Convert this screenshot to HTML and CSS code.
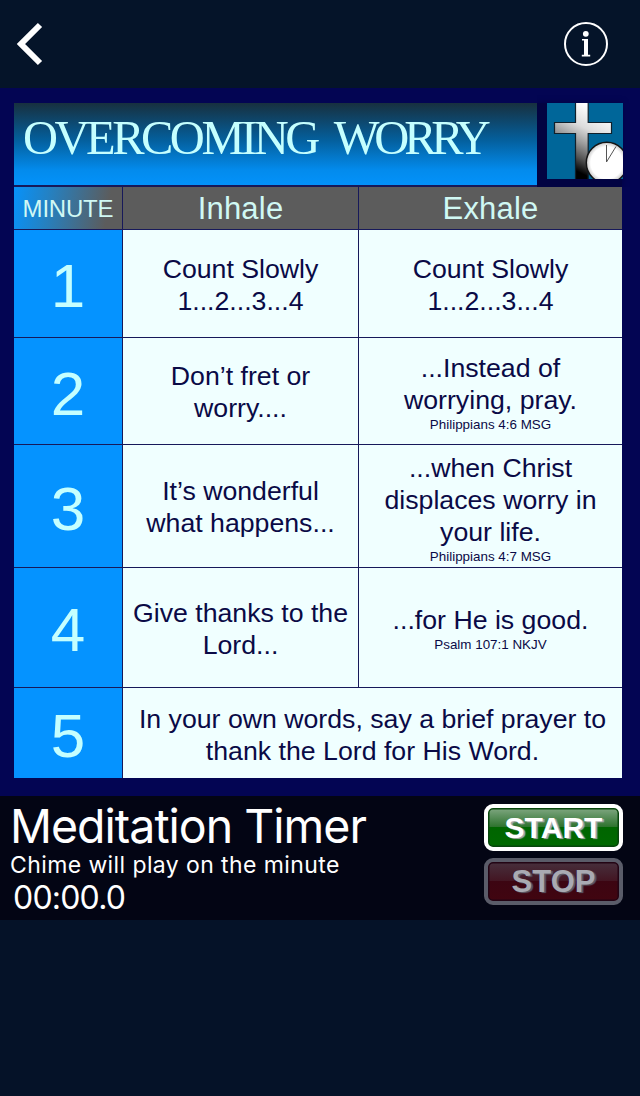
FILE: index.html
```html
<!DOCTYPE html>
<html lang="en">
<head>
<meta charset="utf-8">
<title>Meditation Timer</title>
<link rel="stylesheet" href="styles.css">
</head>
<body>
<header class="topbar">
  <svg class="back" width="28" height="44" viewBox="0 0 28 44"><path d="M24 3 L5 22 L24 41" fill="none" stroke="#fff" stroke-width="6"/></svg>
  <svg class="info" width="44" height="44" viewBox="0 0 44 44"><circle cx="22" cy="22" r="21" fill="none" stroke="#fff" stroke-width="2"/><circle cx="21.8" cy="11.800" r="2.900" fill="#fff"/><path d="M18 17h6v15.800h2.200v1.600h-8.400v-1.600h2.200V18.400h-2z" fill="#fff"/></svg>
</header>
<main class="chart">
  <div class="banner">
    <h1 class="title"><span class="word-a">OVERCOMING</span><span class="word-b">WORRY</span></h1>
    <div class="logo">
      <svg width="76" height="76" viewBox="0 0 76 76">
        <defs>
          <linearGradient id="metal" gradientUnits="userSpaceOnUse" x1="52" y1="8" x2="22" y2="68"><stop offset="0" stop-color="#fff"/><stop offset=".32" stop-color="#dcdcdc"/><stop offset=".55" stop-color="#999"/><stop offset=".75" stop-color="#555"/><stop offset=".95" stop-color="#000"/></linearGradient>
          <radialGradient id="face"><stop offset=".78" stop-color="#fff"/><stop offset="1" stop-color="#c7c7c7"/></radialGradient>
        </defs>
        <rect width="76" height="76" fill="#006699"/>
        <path d="M28.500 -2H41.200V19.500H64.500V30.500H41.200V78H28.500V30.500H7.500V19.500H28.500z" fill="url(#metal)" stroke="#10202b" stroke-width="1.200"/>
        <circle cx="59.800" cy="59.800" r="20.500" fill="url(#face)" stroke="#151515" stroke-width="1.500"/>
        <path d="M59.500 59V42M59.500 59L69 43.500" fill="none" stroke="#555" stroke-width="1"/>
      </svg>
    </div>
  </div>
  <div class="grid">
    <div class="head minute">MINUTE</div><div class="head">Inhale</div><div class="head">Exhale</div>
    <div class="num">1</div>
    <div class="cell"><p>Count Slowly<br>1...2...3...4</p></div>
    <div class="cell"><p>Count Slowly<br>1...2...3...4</p></div>
    <div class="num">2</div>
    <div class="cell"><p>Don’t fret or<br>worry....</p></div>
    <div class="cell"><p>...Instead of<br>worrying, pray.</p><small>Philippians 4:6 MSG</small></div>
    <div class="num">3</div>
    <div class="cell"><p>It’s wonderful<br>what happens...</p></div>
    <div class="cell tall"><p>...when Christ<br>displaces worry in<br>your life.</p><small>Philippians 4:7 MSG</small></div>
    <div class="num">4</div>
    <div class="cell"><p>Give thanks to the<br>Lord...</p></div>
    <div class="cell"><p>...for He is good.</p><small>Psalm 107:1 NKJV</small></div>
    <div class="num">5</div>
    <div class="cell wide"><p>In your own words, say a brief prayer to<br>thank the Lord for His Word.</p></div>
  </div>
</main>
<section class="timer">
  <div class="labels">
    <h2 class="name">Meditation Timer</h2>
    <p class="hint">Chime will play on the minute</p>
    <p class="clock">00:00.0</p>
  </div>
  <div class="buttons">
    <button class="btn start"><span>START</span></button>
    <button class="btn stop"><span>STOP</span></button>
  </div>
</section>
</body>
</html>
```
FILE: styles.css
```css
* { box-sizing: border-box; margin: 0; padding: 0; }
body { width: 640px; height: 1096px; background: #051228; font-family: "Liberation Sans", Arial, sans-serif; overflow: hidden; }
.topbar { height: 88px; padding: 22px 32px 0 16px; display: flex; justify-content: space-between; background: #051429; }
.chart { height: 708px; padding: 15px 18px 18px 14px; background: #030553; }
.banner { display: flex; height: 82px; }
.title { width: 523px; height: 82px; padding-left: 9px; display: flex; gap: 17px; background: linear-gradient(#17303f, #045f9c 45%, #038bed 82%, #0392fa); color: #c5ffff; font: 400 48.5px/69px "Liberation Serif", "Times New Roman", serif; white-space: nowrap; }
.word-a { letter-spacing: -3.5px; }
.word-b { letter-spacing: -5.2px; }
.logo { width: 85px; height: 84px; padding-left: 10px; background: #020342; box-shadow: 0 0 6px #020342; clip-path: inset(-8px -8px 0 0); }
.logo svg { display: block; }
.grid { display: grid; grid-template-columns: 108px 235px 263px; grid-template-rows: 42px 107px 106px 122px 119px 90px; gap: 1px; width: 608px; padding-top: 2px; background: #17195a; }
.head { background: #5c5c5c; color: #d0f8f4; font-size: 31px; line-height: 44px; text-align: center; letter-spacing: .2px; }
.head.minute { background: linear-gradient(100deg, #0792fa 0%, #2382c5 30%, #5c5c5c 85%); font-size: 24px; letter-spacing: -.2px; }
.num { display: flex; align-items: center; justify-content: center; padding-top: 5px; background: #0593ff; color: #c5ffff; font-size: 62px; line-height: 62px; }
.cell { display: flex; flex-direction: column; align-items: center; justify-content: center; padding-top: 2px; background: #f0ffff; color: #0a0a46; text-align: center; white-space: nowrap; }
.cell p { font-size: 26.7px; line-height: 32px; }
.cell small { font-size: 13.4px; line-height: 17px; }
.tall { padding-top: 5px; }
.wide { grid-column: span 2; padding-top: 3px; }
.timer { height: 124px; display: flex; justify-content: space-between; padding: 8px 17px 0 10px; background: #030514; color: #fff; font-family: Inter, sans-serif; }
.labels { white-space: nowrap; }
.name { font-size: 46.5px; font-weight: 400; line-height: 44px; letter-spacing: -1px; }
.hint { font-size: 23px; line-height: 34px; letter-spacing: .4px; }
.clock { padding-left: 3px; font-size: 32px; line-height: 32px; letter-spacing: -.8px; }
.buttons { display: flex; flex-direction: column; gap: 7px; }
.btn { width: 139px; height: 47px; border: 4px solid #fff; border-radius: 9px; color: #fff; font: 700 30px/38px "Liberation Sans", Arial, sans-serif; }
.start { background: linear-gradient(#80a782, #2d722d 49%, #006500 50%, #006900); box-shadow: inset 0 0 0 1.500px #07450c; text-shadow: 2px 1px 1px #aaa; }
.stop { border-color: #5a5c69; color: #a9aab2; background: linear-gradient(#47303d, #431522 49%, #3c0512 50%, #410510); box-shadow: inset 0 0 0 1.500px #230414; text-shadow: 2px 1px 1px #5d5b67; font-size: 31px; }
```
